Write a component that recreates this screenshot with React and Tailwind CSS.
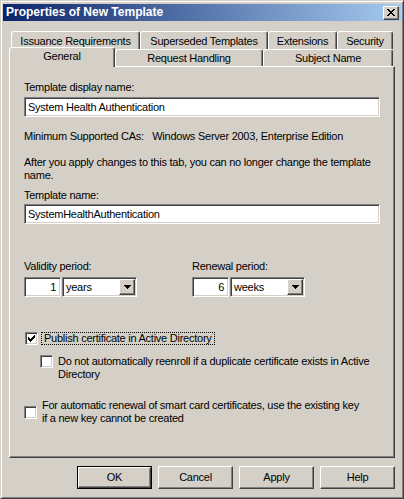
import React from "react";

const sunken =
  "border border-t-[#808080] border-l-[#808080] border-b-white border-r-white shadow-[inset_1px_1px_0_#404040,inset_-1px_-1px_0_#d4d0c8]";
const raised =
  "border border-t-white border-l-white border-b-[#404040] border-r-[#404040] shadow-[inset_-1px_-1px_0_#808080]";

function Tab({ w, h, children, selected }) {
  return (
    <div
      className={`${w} ${h} flex items-center justify-center bg-[#d4d0c8] border-l border-t border-r border-l-white border-t-white border-r-[#404040] rounded-tl-[3px] rounded-tr-[3px] shadow-[inset_-1px_0_0_#808080] ${
        selected ? "relative z-10 mb-[-1px] pb-[3px]" : "pt-[1px]"
      }`}
    >
      {children}
    </div>
  );
}

function Check({ checked }) {
  return (
    <div className={`w-[13px] h-[13px] shrink-0 bg-white ${sunken} flex items-center justify-center`}>
      {checked && (
        <svg width="7" height="7" viewBox="0 0 7 7" shapeRendering="crispEdges">
          <path d="M0 2h1v3h-1zM1 3h1v3h-1zM2 4h1v3h-1zM3 3h1v3h-1zM4 2h1v3h-1zM5 1h1v3h-1zM6 0h1v3h-1z" fill="#000" />
        </svg>
      )}
    </div>
  );
}

function DropBtn() {
  return (
    <div className={`w-[16px] h-[16px] bg-[#d4d0c8] ${raised} flex items-center justify-center`}>
      <svg width="7" height="4" viewBox="0 0 7 4" shapeRendering="crispEdges">
        <path d="M0 0h7v1h-7zM1 1h5v1h-5zM2 2h3v1h-3zM3 3h1v1h-1z" fill="#000" />
      </svg>
    </div>
  );
}

function Period({ value, unit }) {
  return (
    <div className="flex gap-[1px] mt-[4px]">
      <div className={`w-[37px] h-[20px] bg-white ${sunken} flex items-center justify-end pr-[4px]`}>{value}</div>
      <div className={`w-[75px] h-[20px] bg-white ${sunken} flex items-center justify-between pl-[3px] pr-[1px]`}>
        <span>{unit}</span>
        <DropBtn />
      </div>
    </div>
  );
}

function Btn({ children, def }) {
  const inner = (
    <div className={`w-full h-full flex items-center justify-center bg-[#d4d0c8] ${raised}`}>{children}</div>
  );
  if (def) {
    return <div className="w-[75px] h-[23px] border border-black">{inner}</div>;
  }
  return <div className="w-[75px] h-[23px]">{inner}</div>;
}

export default function App() {
  return (
    <div className="w-[404px] h-[499px] bg-[#d4d0c8] border border-t-[#d4d0c8] border-l-[#d4d0c8] border-b-[#404040] border-r-[#404040] shadow-[inset_1px_1px_0_white,inset_-1px_-1px_0_#808080] pt-[3px] px-[2px] flex flex-col font-['Liberation_Sans',Arial,sans-serif] text-[11px] leading-[13px] tracking-[-0.25px] text-black overflow-hidden">
      {/* Title bar */}
      <div className="h-[17px] shrink-0 flex items-center justify-between bg-[linear-gradient(to_right,#0a246a,#a6caf0)] pl-[3px] pr-[2px]">
        <span className="text-white font-bold text-[12px] tracking-normal">Properties of New Template</span>
        <div className={`w-[16px] h-[14px] bg-[#d4d0c8] ${raised} flex items-center justify-center`}>
          <svg width="8" height="7" viewBox="0 0 8 7" shapeRendering="crispEdges">
            <path d="M0 0h2v1h-2zM6 0h2v1h-2zM1 1h2v1h-2zM5 1h2v1h-2zM2 2h4v1h-4zM3 3h2v1h-2zM2 4h4v1h-4zM1 5h2v1h-2zM5 5h2v1h-2zM0 6h2v1h-2zM6 6h2v1h-2z" fill="#000" />
          </svg>
        </div>
      </div>

      {/* Tabs row 1 */}
      <div className="flex ml-[8px] mt-[10px] h-[18px]">
        <Tab w="w-[129px]" h="h-[18px]">Issuance Requirements</Tab>
        <Tab w="w-[128px]" h="h-[18px]">Superseded Templates</Tab>
        <Tab w="w-[69px]" h="h-[18px]">Extensions</Tab>
        <Tab w="w-[56px]" h="h-[18px]">Security</Tab>
      </div>
      {/* Tabs row 2 */}
      <div className="flex items-end ml-[6px] h-[17px]">
        <Tab w="w-[106px]" h="h-[20px]" selected>General</Tab>
        <Tab w="w-[148px]" h="h-[17px]">Request Handling</Tab>
        <Tab w="w-[130px]" h="h-[17px]">Subject Name</Tab>
      </div>

      {/* Panel */}
      <div className="ml-[6px] w-[386px] h-[392px] shrink-0 border border-t-white border-l-white border-b-[#404040] border-r-[#404040] shadow-[inset_-1px_-1px_0_#808080] pl-[14px] pr-[14px] pt-[14px] flex flex-col">
        <div>Template display name:</div>
        <div className={`mt-[3px] w-[356px] h-[20px] bg-white ${sunken} flex items-center pl-[3px]`}>
          System Health Authentication
        </div>
        <div className="mt-[13px]">Minimum Supported CAs:&nbsp;&nbsp; Windows Server 2003, Enterprise Edition</div>
        <div className="mt-[13px] w-[358px]">
          After you apply changes to this tab, you can no longer change the template name.
        </div>
        <div className="mt-[7px]">Template name:</div>
        <div className={`mt-[2px] w-[356px] h-[20px] bg-white ${sunken} flex items-center pl-[3px]`}>
          SystemHealthAuthentication
        </div>

        <div className="mt-[36px] flex">
          <div className="w-[168px]">
            <div>Validity period:</div>
            <Period value="1" unit="years" />
          </div>
          <div>
            <div>Renewal period:</div>
            <Period value="6" unit="weeks" />
          </div>
        </div>

        <div className="mt-[35px] flex items-center pl-[1px]">
          <Check checked />
          <div className="ml-[3px] px-[2px] border border-dotted border-black leading-[11px]">
            Publish certificate in Active Directory
          </div>
        </div>

        <div className="mt-[10px] flex items-start pl-[16px]">
          <Check />
          <div className="ml-[5px] w-[322px]">
            Do not automatically reenroll if a duplicate certificate exists in Active Directory
          </div>
        </div>

        <div className="mt-[18px] flex items-center">
          <Check />
          <div className="ml-[5px] w-[318px]">
            For automatic renewal of smart card certificates, use the existing key if a new key cannot be created
          </div>
        </div>
      </div>

      {/* Buttons */}
      <div className="mt-[8px] flex justify-end gap-[6px] mr-[6px]">
        <Btn def>OK</Btn>
        <Btn>Cancel</Btn>
        <Btn>Apply</Btn>
        <Btn>Help</Btn>
      </div>
    </div>
  );
}
